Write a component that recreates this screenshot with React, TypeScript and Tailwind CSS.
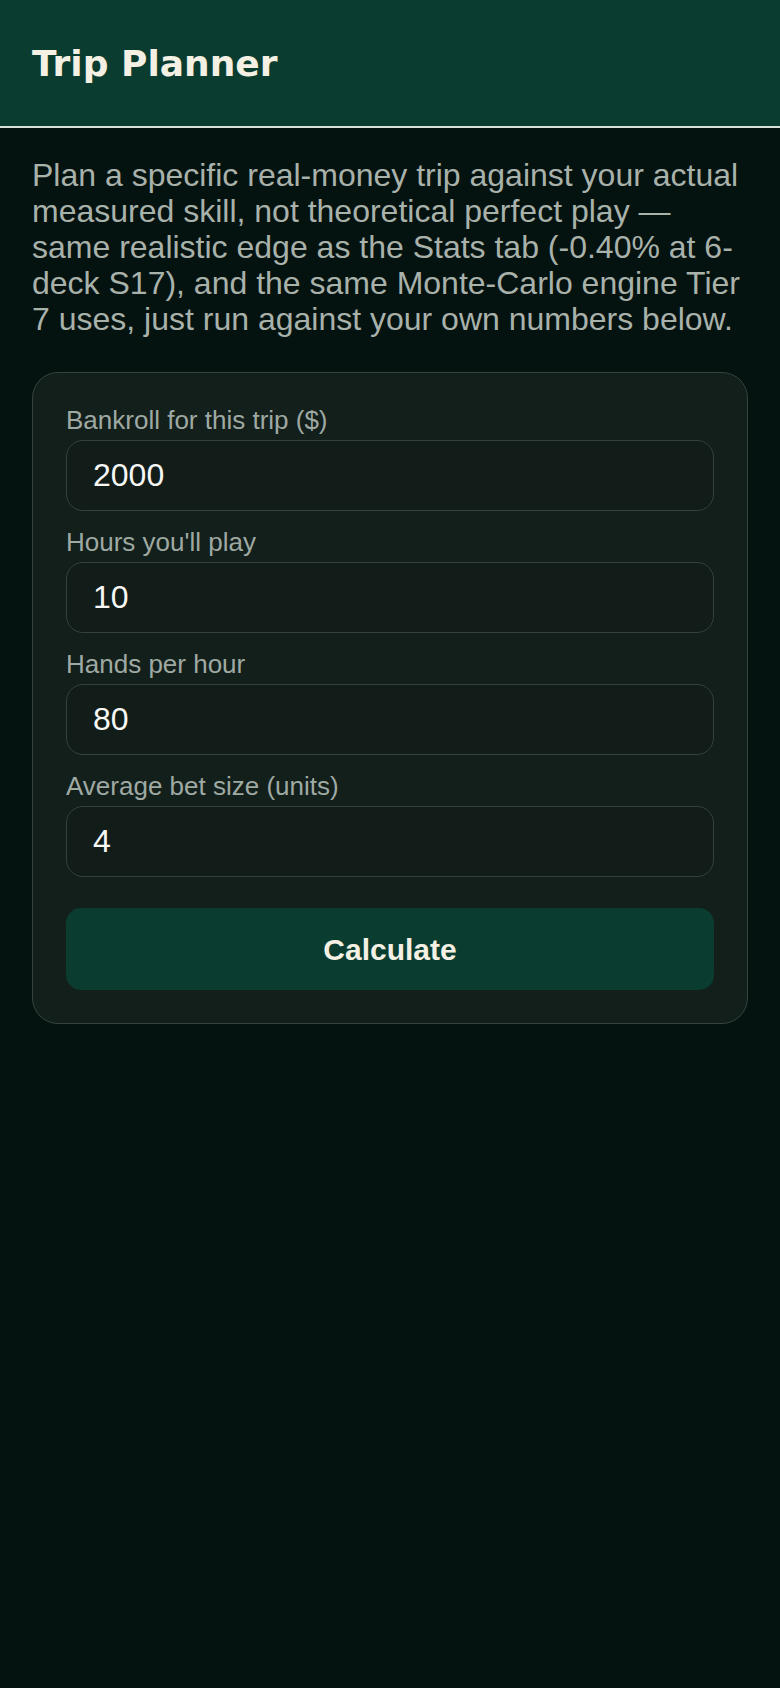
const fields = [
  { label: "Bankroll for this trip ($)", value: "2000" },
  { label: "Hours you'll play", value: "10" },
  { label: "Hands per hour", value: "80" },
  { label: "Average bet size (units)", value: "4" },
];

export default function App() {
  return (
    <div className="min-h-[1688px] bg-[#04130f] font-['Liberation_Sans',Arial,sans-serif]">
      {/* Header */}
      <header className="h-[128px] bg-[#0a3d30] border-b-2 border-[#d9dfd9] flex items-center px-8">
        <h1 className="font-['DejaVu_Sans',sans-serif] font-bold text-[36px] text-[#f4f0e3] leading-none mt-[1px]">
          Trip Planner
        </h1>
      </header>

      <main className="px-8 pt-[29px]">
        <p className="text-[32px] leading-[36px] text-[#a9b1ab]">
          Plan a specific real-money trip against your actual measured skill,
          not theoretical perfect play — same realistic edge as the Stats tab
          (-0.40% at 6-deck S17), and the same Monte-Carlo engine Tier 7 uses,
          just run against your own numbers below.
        </p>

        {/* Form card */}
        <div className="mt-[35px] bg-[#131f1b] border-[1.5px] border-[#34433d] rounded-[26px] p-[33px]">
          <div className="flex flex-col gap-[17px]">
            {fields.map((f) => (
              <div key={f.label} className="flex flex-col gap-[5px]">
                <label className="text-[26px] text-[#9fa9a3] leading-[29px]">
                  {f.label}
                </label>
                <input
                  type="text"
                  defaultValue={f.value}
                  className="h-[71px] w-full bg-[#121c18] border-[1.5px] border-[#33423c] rounded-[17px] px-[26px] text-[32px] text-[#f7f7f5] outline-none"
                />
              </div>
            ))}
          </div>

          <button className="mt-[31px] w-full h-[82px] bg-[#0a3d30] rounded-[15px] text-[30px] font-bold text-[#f4f0e3]">
            Calculate
          </button>
        </div>
      </main>
    </div>
  );
}
